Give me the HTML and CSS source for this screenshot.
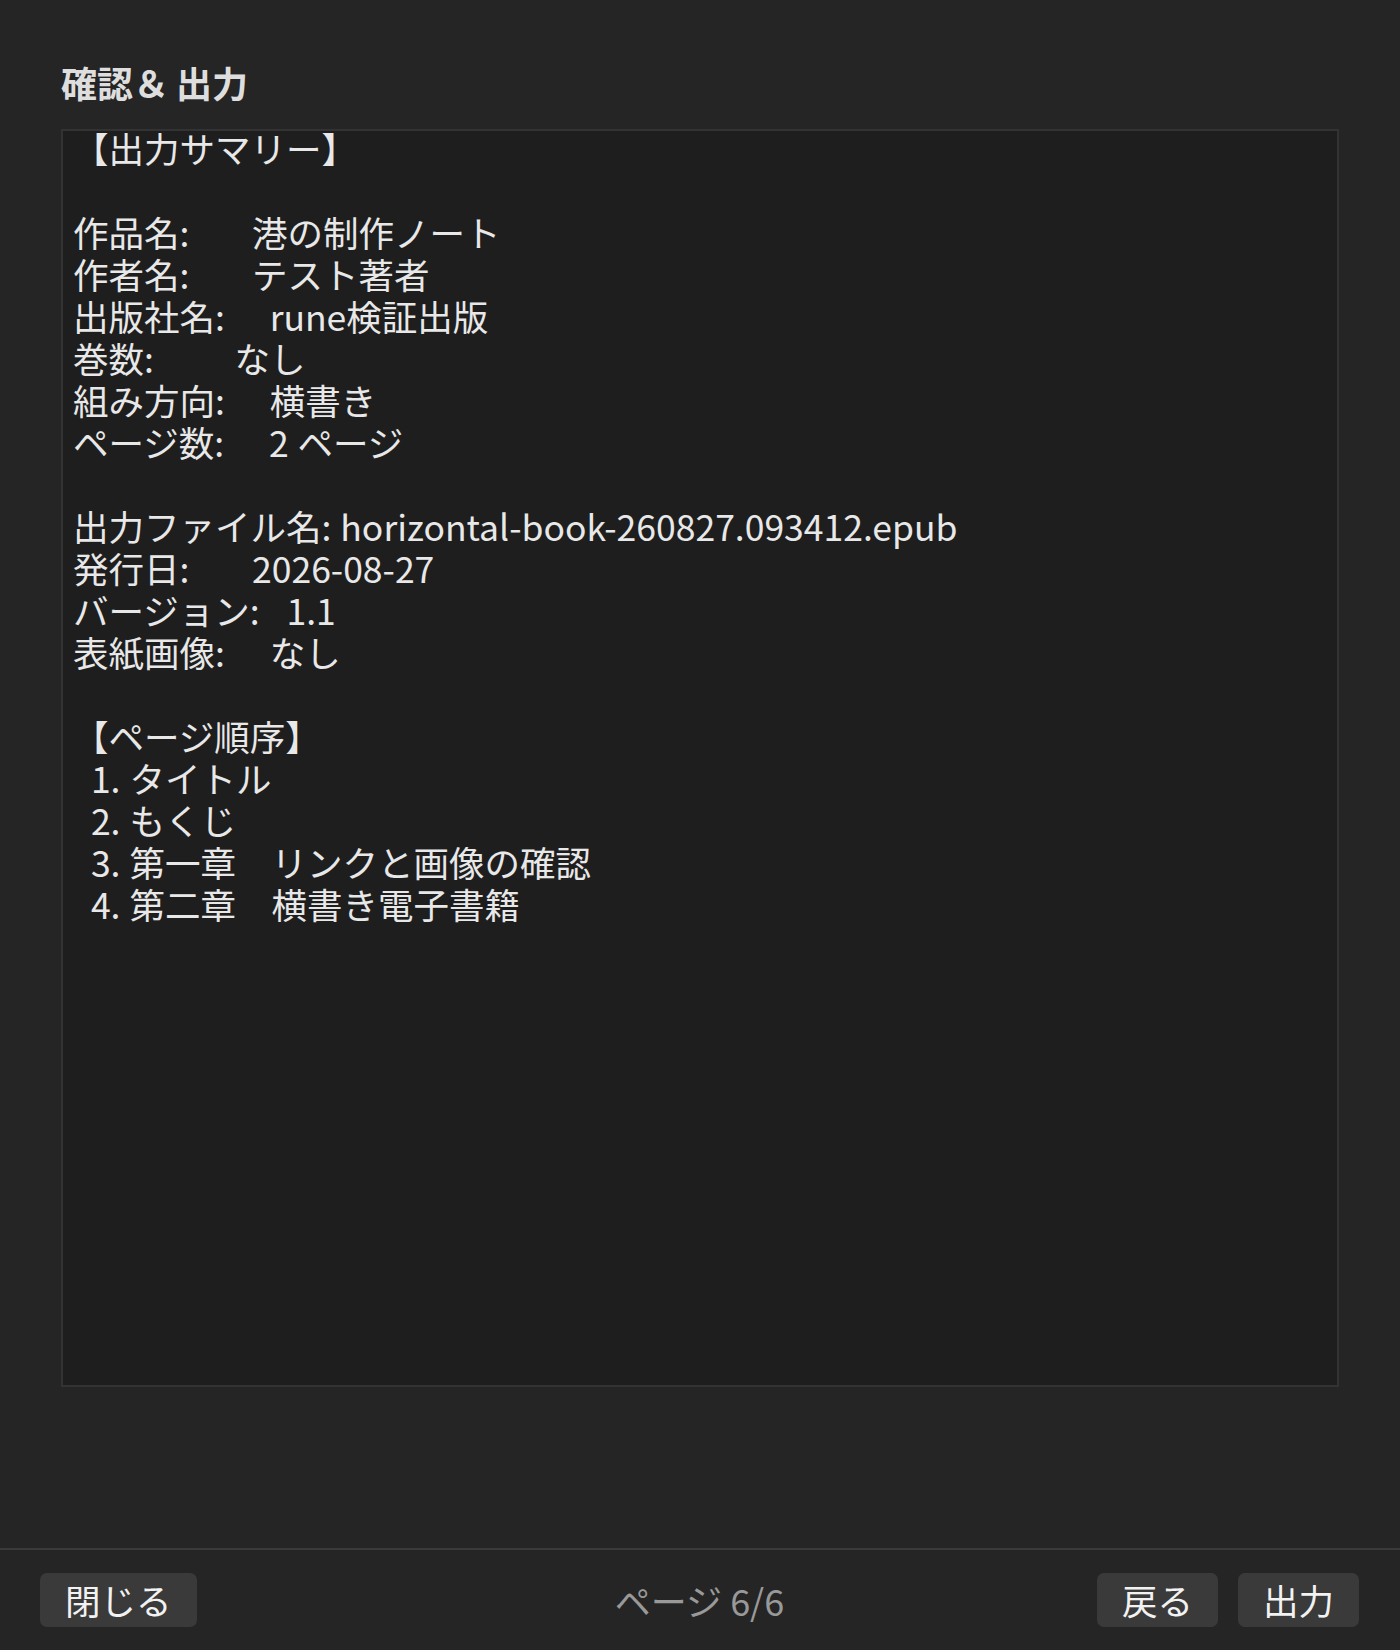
FILE: index.html
```html
<!DOCTYPE html>
<html lang="ja">
<head>
<meta charset="utf-8">
<title>確認＆出力</title>
<link rel="stylesheet" href="styles.css">
</head>
<body>
<div class="app">
  <main class="main">
    <h1 class="title">確認<span class="amp">＆</span>出力</h1>
    <div class="summary"><div class="summary-text">【出力サマリー】

作品名:       港の制作ノート
作者名:       テスト著者
出版社名:     rune検証出版
巻数:         なし
組み方向:     横書き
ページ数:     2 ページ

出力ファイル名: horizontal-book-260827.093412.epub
発行日:       2026-08-27
バージョン:   1.1
表紙画像:     なし

【ページ順序】
  1. タイトル
  2. もくじ
  3. 第一章　リンクと画像の確認
  4. 第二章　横書き電子書籍</div></div>
  </main>
  <footer class="footer">
    <div class="footer-left">
      <button class="btn">閉じる</button>
    </div>
    <div class="page-indicator">ページ 6/6</div>
    <div class="footer-right">
      <button class="btn">戻る</button>
      <button class="btn">出力</button>
    </div>
  </footer>
</div>
</body>
</html>
```
FILE: styles.css
```css
* {
  box-sizing: border-box;
}

html, body {
  margin: 0;
  padding: 0;
  background: #252525;
}

body {
  font-family: "Noto Sans CJK JP", "Noto Sans", sans-serif;
  color: #e6e6e6;
}

.app {
  height: 1650px;
  display: flex;
  flex-direction: column;
}

.main {
  flex: 1;
  padding: 62px 61px 0 61px;
}

.title {
  margin: 0 0 27px 0;
  font-size: 36px;
  line-height: 40px;
  font-weight: 700;
  color: #dedede;
}

.amp {
  margin-right: 7px;
}

.summary {
  height: 1258px;
  background: #1e1e1e;
  border: 2px solid #333333;
  padding: 0 10px;
}

.summary-text {
  margin-top: -4px;
  font-size: 35.5px;
  line-height: 42px;
  word-spacing: 1px;
  white-space: pre-wrap;
  color: #e8e8e8;
}

.footer {
  height: 102px;
  border-top: 2px solid #3a3a3a;
  display: grid;
  grid-template-columns: 1fr auto 1fr;
  align-items: center;
  padding: 0 41px 0 40px;
}

.footer-left {
  display: flex;
  justify-content: flex-start;
}

.footer-right {
  display: flex;
  justify-content: flex-end;
  gap: 20px;
}

.page-indicator {
  font-size: 36px;
  color: #999999;
}

.btn {
  height: 54px;
  padding: 0 25px;
  border: none;
  border-radius: 7px;
  background: #3a3a3a;
  color: #f2f2f2;
  font-family: "Noto Sans CJK JP", "Noto Sans", sans-serif;
  font-size: 35.5px;
  line-height: 54px;
}
```
